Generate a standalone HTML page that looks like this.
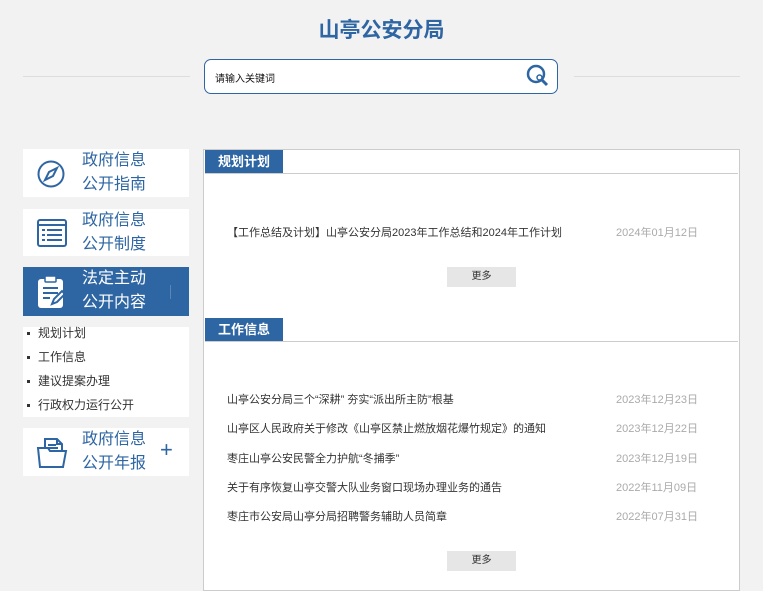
<!DOCTYPE html><html><head><meta charset="utf-8"><style>
body{margin:0;width:763px;height:585px;background:#f2f2f2;font-family:"Liberation Sans","Noto Sans CJK SC",sans-serif;position:relative;overflow:hidden}
.a{position:absolute}
.title{left:0;width:763px;top:14px;text-align:center;font-size:21px;font-weight:bold;color:#2e65a3}
.hl{height:1px;background:#ddd;top:76px}
.search{left:204px;top:59px;width:352px;height:33px;border:1.5px solid #2e65a3;border-radius:7px;background:#fff}
.sb{left:23px;width:166px;background:#fff;color:#2e65a3;font-size:16px;line-height:24px}
.sb .t{position:absolute;left:59px;top:0}
.sub{font-size:12px;color:#333}
.sub div{height:24px;line-height:24px;padding-left:15px;position:relative}
.sub div:before{content:"";position:absolute;left:4px;top:11px;width:3px;height:3px;background:#333}
.panel{left:203px;top:149px;width:535px;height:440px;background:#fff;border:1px solid #ccc}
.tab{left:1px;width:78px;height:23px;background:#2e65a3;color:#fff;font-weight:bold;font-size:13px;line-height:23px;text-align:center}
.ln{left:1px;width:533px;height:1px;background:#ccc}
.it{left:23px;font-size:11px;color:#333;width:500px}
.it span{position:absolute;left:389px;color:#aaa}
.more{left:243px;width:69px;height:20px;background:#e6e6e6;font-size:10px;line-height:20px;text-align:center;color:#333}
</style></head><body>
<div class="a title">山亭公安分局</div>
<div class="a hl" style="left:23px;width:167px"></div>
<div class="a hl" style="left:574px;width:166px"></div>
<div class="a search"><div class="a" style="left:10px;top:10px;font-size:10px;color:#111">请输入关键词</div>
<svg class="a" style="left:319px;top:3px" width="28" height="28" viewBox="0 0 28 28"><circle cx="12" cy="11" r="8" fill="none" stroke="#2e65a3" stroke-width="2.5"/><circle cx="15.5" cy="14.5" r="2.5" fill="none" stroke="#2e65a3" stroke-width="1.5"/><path d="M17 16l6 6" stroke="#2e65a3" stroke-width="3"/></svg></div>

<div class="a sb" style="top:149px;height:48px"><svg class="a" style="left:13px;top:10px" width="30" height="30" viewBox="0 0 30 30"><circle cx="15" cy="15" r="12.5" fill="none" stroke="#2e65a3" stroke-width="2"/><path d="M21 9l-8 4-4 8 8-4z" fill="none" stroke="#2e65a3" stroke-width="2"/></svg><div class="t">政府信息<br>公开指南</div></div>
<div class="a sb" style="top:209px;height:47px"><svg class="a" style="left:13px;top:8px" width="32" height="32" viewBox="0 0 32 32"><rect x="2" y="3" width="28" height="26" rx="2" fill="none" stroke="#2e65a3" stroke-width="2"/><path d="M2 8h28M6 13h3M11 13h15M6 18h3M11 18h15M6 23h3M11 23h15" stroke="#2e65a3" stroke-width="2"/></svg><div class="t">政府信息<br>公开制度</div></div>
<div class="a sb" style="top:267px;height:49px;background:#2e65a3;color:#fff"><svg class="a" style="left:13px;top:8px" width="30" height="34" viewBox="0 0 30 34"><rect x="2" y="4" width="25" height="29" rx="3" fill="#fff"/><rect x="9" y="1" width="11" height="6" rx="1" fill="#fff" stroke="#2e65a3" stroke-width="1.5"/><path d="M7 13h15M7 18h15M7 23h7M16 29l2-5 8-8 3 3-8 8z" stroke="#2e65a3" stroke-width="2" fill="none"/></svg><div class="t">法定主动<br>公开内容</div><div class="a" style="left:147px;top:18px;width:1px;height:14px;background:#5b84b8"></div></div>
<div class="a sb sub" style="top:327px;height:90px"><div style="margin-top:-6px">规划计划</div><div>工作信息</div><div>建议提案办理</div><div>行政权力运行公开</div></div>
<div class="a sb" style="top:428px;height:48px"><svg class="a" style="left:13px;top:8px" width="34" height="34" viewBox="0 0 34 34"><path d="M9 12V3h12l5 5v6M21 3v5h5M12 9h8M12 12h10" stroke="#2e65a3" stroke-width="2" fill="none"/><path d="M2 12h10l2 3h16l-3 16H4z" fill="none" stroke="#2e65a3" stroke-width="2"/></svg><div class="t">政府信息<br>公开年报</div><div class="a" style="left:137px;top:10px;font-size:22px;font-weight:300">+</div></div>

<div class="a panel">
<div class="a tab" style="top:0">规划计划</div><div class="a ln" style="top:23px"></div>
<div class="a it" style="top:74px">【工作总结及计划】山亭公安分局2023年工作总结和2024年工作计划<span>2024年01月12日</span></div>
<div class="a more" style="top:117px">更多</div>
<div class="a tab" style="top:168px">工作信息</div><div class="a ln" style="top:191px"></div>
<div class="a it" style="top:241px">山亭公安分局三个“深耕” 夯实“派出所主防”根基<span>2023年12月23日</span></div>
<div class="a it" style="top:270px">山亭区人民政府关于修改《山亭区禁止燃放烟花爆竹规定》的通知<span>2023年12月22日</span></div>
<div class="a it" style="top:300px">枣庄山亭公安民警全力护航“冬捕季”<span>2023年12月19日</span></div>
<div class="a it" style="top:329px">关于有序恢复山亭交警大队业务窗口现场办理业务的通告<span>2022年11月09日</span></div>
<div class="a it" style="top:358px">枣庄市公安局山亭分局招聘警务辅助人员简章<span>2022年07月31日</span></div>
<div class="a more" style="top:401px">更多</div>
</div>
</body></html>
